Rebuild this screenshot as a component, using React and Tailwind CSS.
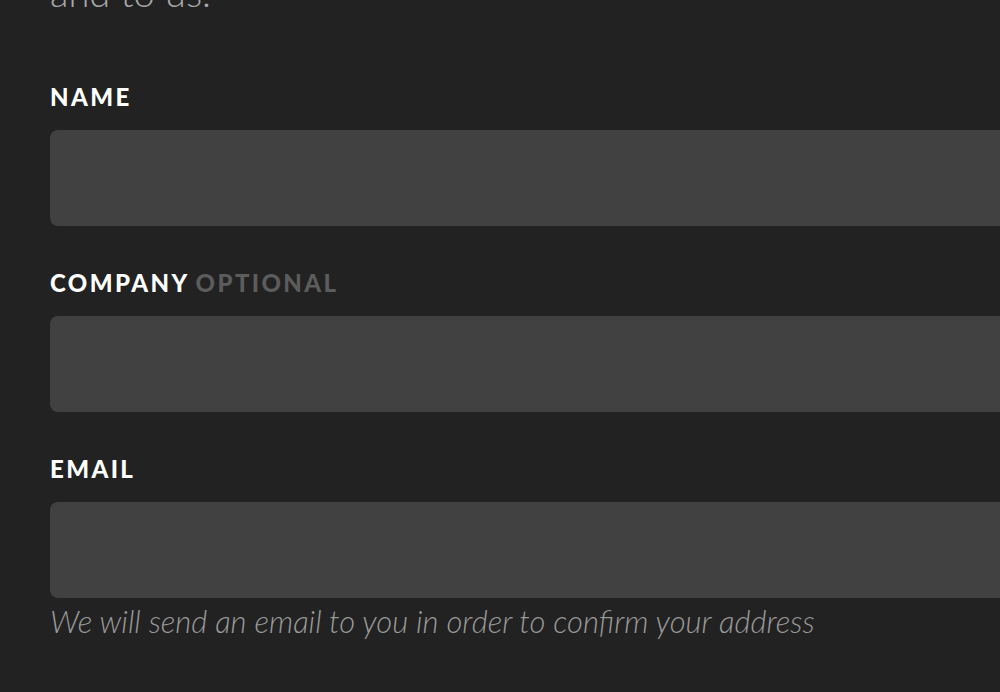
import React from "react";

const Field = ({ label, optional, hint }) => (
  <div className="flex flex-col">
    <label className="text-[24px] leading-6 font-black uppercase tracking-[0.1em] text-white">
      {label}
      {optional && <span className="ml-[6px] text-[#5c5c5c]">Optional</span>}
    </label>
    <div className="mt-[21px] h-[96px] w-full rounded-lg bg-[#414141]" />
    {hint && (
      <p className="mt-[7px] text-[31px] leading-8 font-light italic text-[#9a9a9a]">{hint}</p>
    )}
  </div>
);

export default function App() {
  return (
    <div
      className="min-h-screen overflow-hidden bg-[#222222] pl-[50px]"
      style={{ fontFamily: "Lato, 'Open Sans', sans-serif" }}
    >
      <p className="-mt-[32px] text-[38px] leading-[48px] font-light text-[#a9a9a9]">and to us.</p>
      <div className="mt-[69px] flex w-[1000px] flex-col gap-[45px]">
        <Field label="Name" />
        <Field label="Company" optional />
        <Field label="Email" hint="We will send an email to you in order to confirm your address" />
      </div>
    </div>
  );
}
